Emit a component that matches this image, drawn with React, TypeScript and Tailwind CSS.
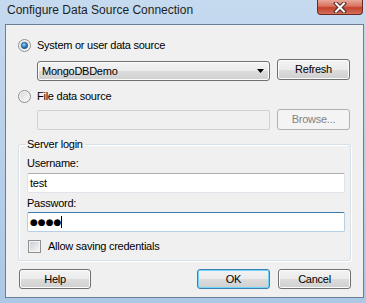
import React from "react";

const btn =
  "flex items-center justify-center rounded-[3px] border border-[#707070] bg-[linear-gradient(#f2f2f2_0%,#ebebeb_50%,#dddddd_50%,#cfcfcf_100%)] shadow-[inset_0_0_0_1px_#fcfcfc] text-black";

function Radio({ checked }: { checked?: boolean }) {
  return (
    <svg width="13" height="13" viewBox="0 0 13 13" className="shrink-0">
      <defs>
        <linearGradient id="rg-o" x1="0" y1="0" x2="1" y2="1">
          <stop offset="0" stopColor="#d7d7d7" />
          <stop offset="1" stopColor="#fbfbfb" />
        </linearGradient>
        <radialGradient id="rg-d" cx="0.4" cy="0.35" r="0.7">
          <stop offset="0" stopColor="#9fd6f7" />
          <stop offset="0.5" stopColor="#3a86c8" />
          <stop offset="1" stopColor="#1b4f88" />
        </radialGradient>
      </defs>
      <circle cx="6.5" cy="6.5" r="6" fill="#f6f6f6" stroke="#8c8c8c" />
      <circle cx="6.5" cy="6.5" r="4.5" fill="url(#rg-o)" />
      {checked && <circle cx="6.5" cy="6.5" r="3.2" fill="url(#rg-d)" stroke="#1c4a7a" strokeWidth="0.6" />}
    </svg>
  );
}

export default function App() {
  return (
    <div className="w-[366px] h-[303px] overflow-hidden flex flex-col bg-[linear-gradient(180deg,#c6daef_0%,#bad1ea_40%,#acc8e6_100%)] font-['Liberation_Sans',Arial,sans-serif] text-[11px] leading-[13px] text-black">
      {/* title bar */}
      <div className="h-[24px] flex items-start shrink-0">
        <div className="pl-[7px] pt-[3px] text-[12px] leading-[14px] text-[#1e1e1e]">Configure Data Source Connection</div>
        <div className="ml-auto mr-[3px] w-[46px] h-[15px] rounded-b-[4px] border border-t-0 border-[#6e2a22] bg-[linear-gradient(180deg,#e9a99a_0%,#d9705d_45%,#c5402a_55%,#d3705b_100%)] flex items-center justify-center">
          <svg width="14" height="11" viewBox="0 0 14 11">
            <path d="M3 1.5 L11 9.5 M11 1.5 L3 9.5" stroke="#4a2a2a" strokeWidth="4" strokeLinecap="square" />
            <path d="M3 1.5 L11 9.5 M11 1.5 L3 9.5" stroke="#ffffff" strokeWidth="2" strokeLinecap="square" />
          </svg>
        </div>
      </div>

      {/* client area */}
      <div className="ml-[5px] mr-[2px] mb-[5px] flex-1 border border-[#6a7f94] bg-[#f0f0f0] pl-[12px] pr-[12px] pt-[14px] flex flex-col tracking-[-0.25px]">
        <div className="flex items-center h-[13px]">
          <div className="w-[19px]">
            <Radio checked />
          </div>
          <span>System or user data source</span>
        </div>

        <div className="flex items-start mt-[7px] pl-[19px] gap-[7px]">
          <div className="mt-[2px] w-[233px] h-[20px] rounded-[3px] border border-[#707070] bg-[linear-gradient(#f2f2f2_0%,#ebebeb_50%,#dddddd_50%,#cfcfcf_100%)] shadow-[inset_0_0_0_1px_#fcfcfc] flex items-center pl-[4px] pr-[5px]">
            <span className="flex-1">MongoDBDemo</span>
            <svg width="7" height="4" viewBox="0 0 7 4">
              <path d="M0 0 H7 L3.5 4 Z" fill="#000" />
            </svg>
          </div>
          <div className={`${btn} w-[73px] h-[21px]`}>Refresh</div>
        </div>

        <div className="flex items-center h-[13px] mt-[9px]">
          <div className="w-[19px]">
            <Radio />
          </div>
          <span>File data source</span>
        </div>

        <div className="flex items-start mt-[6px] pl-[19px] gap-[7px]">
          <div className="mt-[1px] w-[233px] h-[20px] rounded-[2px] border border-[#cfd1d4] bg-[#f0f0f0]" />
          <div className="w-[73px] h-[21px] rounded-[3px] border border-[#adb2b5] bg-[#f4f4f4] flex items-center justify-center text-[#838383]">
            Browse...
          </div>
        </div>

        <fieldset className="mt-[8px] rounded-[3px] border border-[#d5dfe5] shadow-[inset_1px_1px_0_#ffffff,1px_1px_0_#ffffff] pl-[8px] pr-[5px] pb-[7px]">
          <legend className="pl-[1px] pr-[2px] -ml-[1px]">Server login</legend>
          <div className="mt-[6px]">Username:</div>
          <div className="mt-[3px] h-[20px] rounded-[2px] border border-[#e2e3ea] border-t-[#abadb3] bg-white flex items-center pl-[2px]">
            test
          </div>
          <div className="mt-[4px]">Password:</div>
          <div className="mt-[2px] h-[20px] rounded-[2px] border border-[#b5cfe7] border-t-[#3d7bad] bg-white flex items-center pl-[2px]">
            <span className="font-['DejaVu_Sans',sans-serif] text-[9px] tracking-[0px]">●●●●</span>
            <span className="w-px h-[12px] bg-black" />
          </div>
          <div className="mt-[8px] flex items-center h-[13px] pl-[1px]">
            <span className="w-[13px] h-[13px] border border-[#8e8f8f] bg-[#f4f4f4] p-[1px] shrink-0">
              <span className="block w-full h-full bg-[linear-gradient(135deg,#cbcfd5,#f6f6f6)]" />
            </span>
            <span className="ml-[7px]">Allow saving credentials</span>
          </div>
        </fieldset>

        <div className="mt-[8px] flex items-start">
          <div className={`${btn} ml-[1px] w-[72px] h-[20px]`}>Help</div>
          <div className="ml-auto flex gap-[8px]">
            <div className="w-[73px] h-[20px] rounded-[3px] border border-[#3c7fb1] bg-[linear-gradient(#f2f2f2_0%,#ebebeb_50%,#dddddd_50%,#cfcfcf_100%)] shadow-[inset_0_0_0_1px_#6fd6f7] flex items-center justify-center">
              OK
            </div>
            <div className={`${btn} w-[73px] h-[20px]`}>Cancel</div>
          </div>
        </div>
      </div>
    </div>
  );
}
